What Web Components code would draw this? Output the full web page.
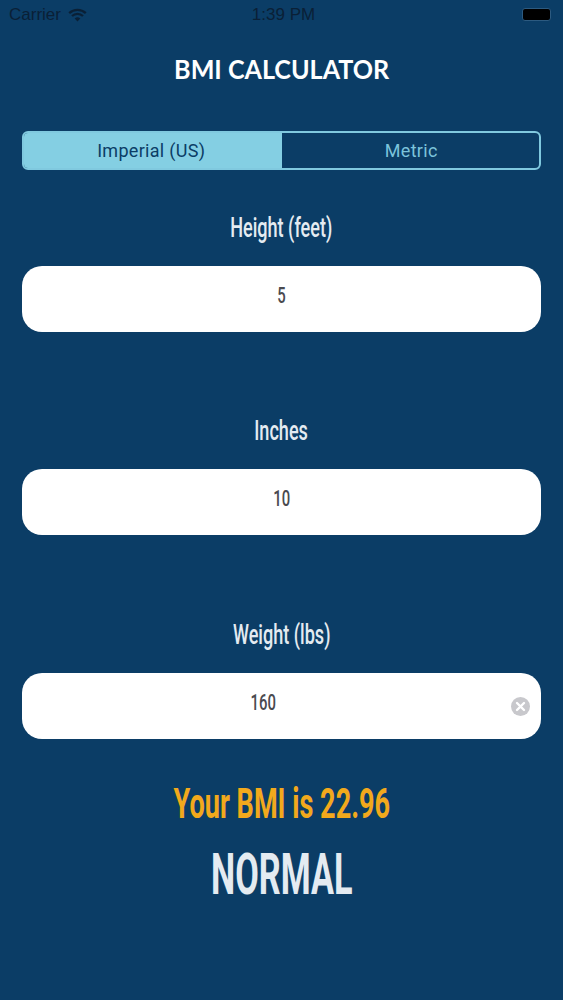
<!DOCTYPE html>
<html><head><meta charset="utf-8"><title>BMI Calculator</title>
<style>
html,body{margin:0;padding:0;background:#0b3d66}
body{width:563px;height:1000px;overflow:hidden}
</style></head><body>
<bmi-app></bmi-app>
<script>
function def(name,html){
  customElements.define(name,class extends HTMLElement{
    connectedCallback(){
      if(this.shadowRoot)return;
      this.attachShadow({mode:'open'}).innerHTML=typeof html==='function'?html(this):html;
    }
  });
}
def('status-bar',`<style>
:host{display:grid;grid-template-columns:1fr auto 1fr;align-items:center;height:28px;padding:1px 5px 0 9px;color:#0a2036;font:17px "Liberation Sans",sans-serif;box-sizing:border-box}
.l{display:flex;align-items:center;gap:7px}
.r{display:flex;justify-content:flex-end;padding-right:7px}
.bat{width:29px;height:13px;background:#000;border:1px solid #2c5a80;border-radius:3px;box-sizing:border-box}
</style>
<div class="l"><span>Carrier</span><svg width="19" height="14" viewBox="0 0 19 14"><path fill="none" stroke="#0a2036" stroke-width="2.3" d="M1.2 5.2a12 12 0 0 1 16.6 0M4 8a8 8 0 0 1 11 0"/><path fill="#0a2036" d="M6.7 10.4a4.2 4.2 0 0 1 5.6 0L9.5 13.4z"/></svg></div>
<span>1:39 PM</span>
<div class="r"><div class="bat"></div></div>`);
def('seg-control',`<style>
:host{display:grid;grid-template-columns:1fr 1fr;height:39px;border:2px solid #80c9df;border-radius:6px;box-sizing:border-box;overflow:hidden;font:18px Roboto,sans-serif;letter-spacing:.3px}
div{display:flex;align-items:center;justify-content:center}
.on{background:#84cfe3;color:#0b3d66;padding-right:3px}
.off{color:#7cc4dc;padding-left:2px}
</style><div class="on">Imperial (US)</div><div class="off">Metric</div>`);
def('num-field',h=>`<style>
:host{display:block}
label{display:block;text-align:center;color:#e4ebf1;font:500 27px/30px Roboto,sans-serif;height:30px;margin-bottom:23px}
label span{display:inline-block;transform:scaleX(.67)}
.box{position:relative;height:66px;background:#fff;border-radius:20px;display:flex;align-items:center;justify-content:center;color:#4a4a4f;font:500 22.5px Roboto,sans-serif}
.box span{transform:translateY(-4px) scaleX(.66)}
.box.shift span{transform:translate(-18px,-4px) scaleX(.66)}
svg{position:absolute;right:11px;top:24px}
</style><label><span>${h.getAttribute('label')}</span></label>
<div class="box ${h.hasAttribute('clear')?'shift':''}"><span>${h.getAttribute('value')}</span>${h.hasAttribute('clear')?`<svg width="19" height="19" viewBox="0 0 19 19"><circle cx="9.5" cy="9.5" r="9.5" fill="#c8c8cc"/><path d="M6 6l7 7M13 6l-7 7" stroke="#fff" stroke-width="2.4" stroke-linecap="round"/></svg>`:''}</div>`);
def('bmi-app',`<style>
:host{display:block;height:1000px;box-sizing:border-box;color:#fff}
.wrap{padding:0 22px;display:flex;flex-direction:column}
h1{margin:23px 0 0;height:36px;text-align:center;font:700 27px/36px Lato,sans-serif;color:#fff}
h1 span{display:inline-block;transform:scaleX(.93)}
seg-control{margin-top:44px}
num-field{margin-bottom:84px}
num-field.first{margin-top:43px}
num-field.mid{margin-bottom:85px}
num-field.last{margin-bottom:0}
.bmi{margin-top:44px;text-align:center;color:#f2a91c;font:700 43px/40px Roboto,sans-serif}
.res{margin-top:22px;text-align:center;color:#e4ebf1;font:700 57px/60px Roboto,sans-serif}
.bmi span{display:inline-block;transform:scaleX(.63)}
.res span{display:inline-block;transform:scaleX(.6)}
</style>
<status-bar></status-bar>
<div class="wrap">
<h1><span>BMI CALCULATOR</span></h1>
<seg-control></seg-control>
<num-field class="first" label="Height (feet)" value="5"></num-field>
<num-field class="mid" label="Inches" value="10"></num-field>
<num-field class="last" label="Weight (lbs)" value="160" clear></num-field>
<div class="bmi"><span>Your BMI is 22.96</span></div>
<div class="res"><span>NORMAL</span></div>
</div>`);
</script></body></html>
